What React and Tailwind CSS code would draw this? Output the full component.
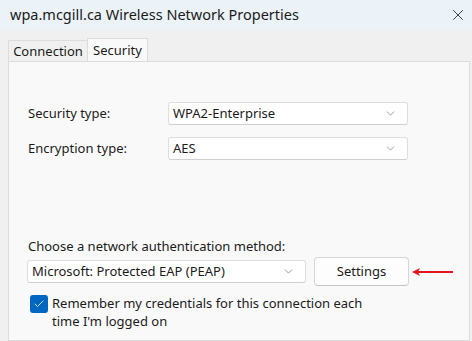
import React from 'react';
import { ChevronDown, Check, X } from 'lucide-react';

function Select({ value, width }) {
  return (
    <div
      className={`flex h-[23px] ${width} items-center justify-between rounded-[3px] border border-[#dedede] border-b-[#cfcfcf] bg-white pl-[4px] pr-[10px]`}
    >
      <span>{value}</span>
      <ChevronDown size={13} strokeWidth={1.25} className="text-[#707070]" />
    </div>
  );
}

export default function App() {
  return (
    <div
      className="flex h-[341px] w-[472px] flex-col overflow-hidden bg-[#f0f0f0] text-[13px] text-[#1b1b1b]"
      style={{ fontFamily: '"Noto Sans", "Open Sans", sans-serif' }}
    >
      {/* Title bar */}
      <div className="flex h-[29px] shrink-0 items-center justify-between bg-[#ebf3f8] pl-[10px] pr-[5px]">
        <span className="text-[14.5px] leading-none">wpa.mcgill.ca Wireless Network Properties</span>
        <X size={18} strokeWidth={1.1} className="text-[#1b1b1b]" />
      </div>

      {/* Tabs */}
      <div className="mt-[9px] flex h-[24px] shrink-0 items-end pl-[8px]">
        <div className="flex h-[22px] w-[79px] items-center justify-center border border-b-0 border-r-0 border-[#dcdcdc] bg-[#f0f0f0]">
          Connection
        </div>
        <div className="flex h-[24px] w-[61px] items-center justify-center border border-b-0 border-[#dcdcdc] bg-[#f9f9f9]">
          Security
        </div>
      </div>

      {/* Panel */}
      <div className="ml-[8px] mr-[2px] -mt-px flex-1 border border-[#dcdcdc] bg-[#f9f9f9] pl-[18px] pt-[40px]">
        <div className="flex items-center">
          <span className="w-[141px] pl-[1px]">Security type:</span>
          <Select value="WPA2-Enterprise" width="w-[240px]" />
        </div>
        <div className="mt-[12px] flex items-center">
          <span className="w-[141px] pl-[1px]">Encryption type:</span>
          <Select value="AES" width="w-[240px]" />
        </div>

        <div className="mt-[77px] pl-[1px] leading-[19px]">Choose a network authentication method:</div>
        <div className="mt-[1px] flex items-center gap-[8px]">
          <Select value="Microsoft: Protected EAP (PEAP)" width="w-[279px]" />
          <button className="h-[29px] w-[95px] rounded-[4px] border border-[#d6d6d6] border-b-[#c4c4c4] bg-[#fdfdfd]">
            Settings
          </button>
          <svg width="44" height="10" viewBox="0 0 44 10" className="-ml-[6px]">
            <line x1="4" y1="5" x2="42" y2="5" stroke="#e3161b" strokeWidth="2" />
            <path d="M1 5 L9 1 L7 5 L9 9 Z" fill="#e3161b" />
          </svg>
        </div>

        <div className="mt-[8px] flex items-start gap-[4px] pl-[3px]">
          <div className="mt-[1px] flex h-[18px] w-[18px] shrink-0 items-center justify-center rounded-[3px] bg-[#0067c0]">
            <Check size={12} strokeWidth={1.5} className="text-white" />
          </div>
          <div className="leading-[18px]">
            Remember my credentials for this connection each
            <br />
            time I'm logged on
          </div>
        </div>
      </div>
    </div>
  );
}
